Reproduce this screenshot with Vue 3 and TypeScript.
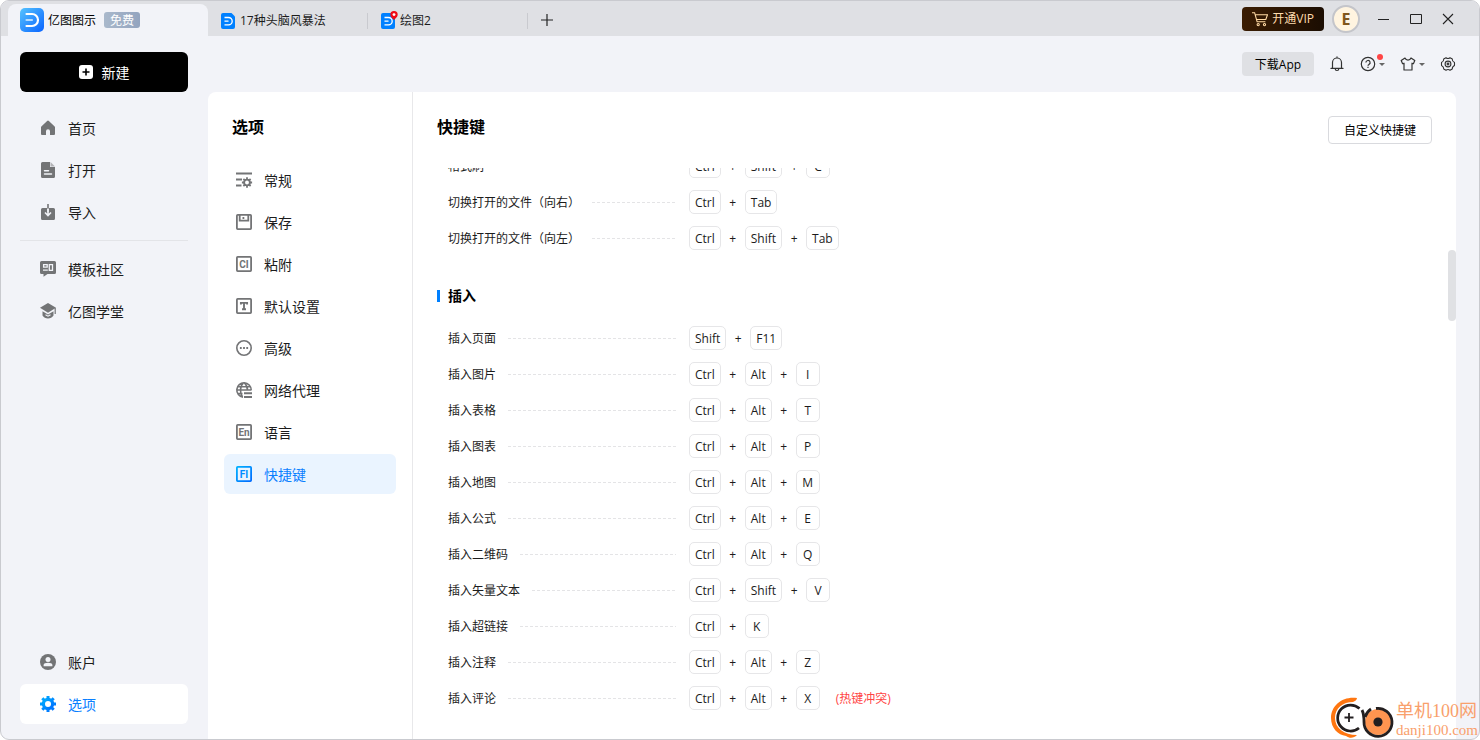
<script setup lang="ts">
interface NavItem {
  label: string
  icon: string
  active?: boolean
}
interface Shortcut {
  name: string
  keys: string[]
  conflict?: boolean
}

const icons: Record<string, string> = {
  home: '<path fill="currentColor" d="M7.1 .9a1.4 1.4 0 0 1 1.8 0l5.500 5.300c.4.3.6.8.6 1.300V14a1 1 0 0 1-1 1h-4v-3.800a2 2 0 0 0-4 0V15H2a1 1 0 0 1-1-1V7.500c0-.5.2-1 .6-1.300z"/>',
  file: '<path fill="currentColor" d="M2.500 0H10v5h5v9.500a1.500 1.500 0 0 1-1.500 1.500h-11A1.500 1.500 0 0 1 1 14.500v-13A1.500 1.500 0 0 1 2.500 0z"/><path fill="currentColor" opacity=".5" d="M10.500 0 15 4.500h-4.500z"/><path stroke="#f2f3f8" stroke-width="1.500" stroke-linecap="round" d="M4.500 8.700h4M4.500 12h7"/>',
  import: '<path fill="currentColor" d="M2.500 4h4.700v4h1.600V4h4.700A1.500 1.500 0 0 1 15 5.500v9a1.500 1.500 0 0 1-1.500 1.500h-11A1.500 1.500 0 0 1 1 14.500v-9A1.500 1.500 0 0 1 2.500 4z"/><path d="M8 0v5" stroke="currentColor" stroke-width="1.600"/><path d="M8 4.500V11M5 8.500l3 3 3-3" fill="none" stroke="#f2f3f8" stroke-width="1.600"/>',
  community: '<path fill="currentColor" d="M1.500 0h13A1.500 1.500 0 0 1 16 1.500v10a1.500 1.500 0 0 1-1.500 1.500H7.500L3.500 15.700V13h-2A1.500 1.500 0 0 1 0 11.500v-10A1.500 1.500 0 0 1 1.500 0z"/><path fill="none" stroke="#f2f3f8" stroke-width="1.300" d="M3.600 3.600h3.600v2.600H3.600zM9.300 3.600h3.200v5.800H9.300zM3 9.200h4.800"/>',
  school: '<path fill="currentColor" d="M8 0l8 4.700-8 5-8-5z"/><path fill="currentColor" d="M2.500 8.200 8 11.500l5.500-3.300v4.300C12.300 14.500 10.200 15.500 8 15.500s-4.300-1-5.500-3z"/><path stroke="currentColor" stroke-width="1.200" d="M15.200 5v6"/><path stroke="#f2f3f8" stroke-width="1.100" fill="none" d="M5.500 11.800 8 13.200l2.500-1.400"/>',
  account: '<circle cx="8" cy="8" r="8" fill="currentColor"/><circle cx="8" cy="5.600" r="2.500" fill="#f2f3f8"/><path fill="#f2f3f8" d="M3.600 12.200V11c0-1.400 2-2.300 4.400-2.300s4.400.9 4.400 2.300v1.200z"/>',
  gear: '<circle cx="8" cy="8" r="4.600" fill="none" stroke="url(#blueGrad)" stroke-width="3.200"/><path fill="none" stroke="url(#blueGrad)" stroke-width="3" d="M8 0v3M8 13v3M0 8h3M13 8h3M2.300 2.300l2.200 2.200M11.500 11.500l2.200 2.200M13.700 2.300l-2.200 2.200M4.500 11.500l-2.200 2.200"/>',
  general: '<path fill="none" stroke="currentColor" stroke-width="1.800" d="M0 1.500h16M0 7.500h6M0 13.500h5.500"/><circle cx="11" cy="10.500" r="2.900" fill="none" stroke="currentColor" stroke-width="1.900"/><path fill="none" stroke="currentColor" stroke-width="1.800" d="M11 5.300v2M11 13.700v2M5.900 10.500h2M14.100 10.500h2M7.400 6.900l1.400 1.400M13.200 12.700l1.400 1.400M14.600 6.900l-1.400 1.400M8.800 12.700l-1.400 1.400"/>',
  save: '<g fill="none" stroke="currentColor" stroke-width="1.800"><rect x=".9" y=".9" width="14.200" height="14.200" rx=".8"/><path d="M3.700 1v5.700h8.600V1"/></g><path fill="currentColor" d="M6.500 3h1.800v2H6.500z"/>',
  paste: '<rect x=".9" y=".9" width="14.200" height="14.200" rx=".8" fill="none" stroke="currentColor" stroke-width="1.800"/><text x="8" y="11.600" class="glyph">CI</text>',
  defaults: '<rect x=".9" y=".9" width="14.200" height="14.200" rx=".8" fill="none" stroke="currentColor" stroke-width="1.800"/><path d="M4.900 6.400V4.900h6.200v1.500M8 4.900v6.400M6 11.300h4" fill="none" stroke="currentColor" stroke-width="1.900"/>',
  advanced: '<circle cx="8" cy="8" r="7.200" fill="none" stroke="currentColor" stroke-width="1.600"/><path fill="currentColor" d="M3.900 7.100h1.800v1.800H3.900zM7.100 7.100h1.800v1.800H7.100zM10.300 7.100h1.800v1.800h-1.800z"/>',
  proxy: '<g fill="none" stroke="currentColor" stroke-width="1.600"><path d="M7 15.200A7.200 7.200 0 1 1 15.200 8M1 8h14.500M1.800 4.800h12.400M6.500 15C3.600 11 3.800 4 7.500 1M8.500 1c2 2 3 4.500 3 7M1.500 11.500h5"/><path d="M8 11.300h8M8 15h8" stroke-width="1.900"/></g>',
  language: '<rect x=".9" y=".9" width="14.200" height="14.200" rx=".8" fill="none" stroke="currentColor" stroke-width="1.800"/><text x="8" y="11.600" class="glyph">En</text>',
  shortcut: '<rect x=".9" y=".9" width="14.200" height="14.200" rx=".8" fill="none" stroke="url(#blueGrad)" stroke-width="1.800"/><text x="8" y="11.600" class="glyph">FI</text>',
}

const mainNav: NavItem[] = [
  { label: '首页', icon: 'home' },
  { label: '打开', icon: 'file' },
  { label: '导入', icon: 'import' },
]
const linkNav: NavItem[] = [
  { label: '模板社区', icon: 'community' },
  { label: '亿图学堂', icon: 'school' },
]
const footNav: NavItem[] = [
  { label: '账户', icon: 'account' },
  { label: '选项', icon: 'gear', active: true },
]
const optionNav: NavItem[] = [
  { label: '常规', icon: 'general' },
  { label: '保存', icon: 'save' },
  { label: '粘附', icon: 'paste' },
  { label: '默认设置', icon: 'defaults' },
  { label: '高级', icon: 'advanced' },
  { label: '网络代理', icon: 'proxy' },
  { label: '语言', icon: 'language' },
  { label: '快捷键', icon: 'shortcut', active: true },
]
const groups: { title: string; items: Shortcut[] }[] = [
  {
    title: '',
    items: [
      { name: '格式刷', keys: ['Ctrl', 'Shift', 'C'] },
      { name: '切换打开的文件（向右）', keys: ['Ctrl', 'Tab'] },
      { name: '切换打开的文件（向左）', keys: ['Ctrl', 'Shift', 'Tab'] },
    ],
  },
  {
    title: '插入',
    items: [
      { name: '插入页面', keys: ['Shift', 'F11'] },
      { name: '插入图片', keys: ['Ctrl', 'Alt', 'I'] },
      { name: '插入表格', keys: ['Ctrl', 'Alt', 'T'] },
      { name: '插入图表', keys: ['Ctrl', 'Alt', 'P'] },
      { name: '插入地图', keys: ['Ctrl', 'Alt', 'M'] },
      { name: '插入公式', keys: ['Ctrl', 'Alt', 'E'] },
      { name: '插入二维码', keys: ['Ctrl', 'Alt', 'Q'] },
      { name: '插入矢量文本', keys: ['Ctrl', 'Shift', 'V'] },
      { name: '插入超链接', keys: ['Ctrl', 'K'] },
      { name: '插入注释', keys: ['Ctrl', 'Alt', 'Z'] },
      { name: '插入评论', keys: ['Ctrl', 'Alt', 'X'], conflict: true },
    ],
  },
]
</script>

<template>
  <div class="window">
    <svg class="defs" aria-hidden="true">
      <defs>
        <linearGradient id="blueGrad" x1="0" y1="0" x2="1" y2="1">
          <stop offset="0" stop-color="#00b0ff" />
          <stop offset="1" stop-color="#006bff" />
        </linearGradient>
        <linearGradient id="logoGrad" x1="0" y1="0" x2="1" y2="1">
          <stop offset="0" stop-color="#55c3ff" />
          <stop offset="1" stop-color="#0a64ff" />
        </linearGradient>
      </defs>
    </svg>

    <header class="titlebar">
      <div class="apptab">
        <svg class="logo" viewBox="0 0 24 24">
          <rect width="24" height="24" rx="5" fill="url(#logoGrad)" />
          <path d="M6.500 6H12a6 6 0 0 1 0 12H6.500" fill="none" stroke="#fff" stroke-width="2.200" stroke-linecap="round" />
          <path d="M6.500 12H12" stroke="#b5dcff" stroke-width="2.200" stroke-linecap="round" />
        </svg>
        <span class="label">亿图图示</span>
        <span class="free">免费</span>
      </div>
      <button class="doctab" type="button">
        <svg class="docicon" viewBox="0 0 14 16">
          <path d="M2 0h8.500L14 3.500V14a2 2 0 0 1-2 2H2a2 2 0 0 1-2-2V2a2 2 0 0 1 2-2z" fill="#0080ff" />
          <path d="M3.500 4.500h4a3.700 3.700 0 0 1 0 7.400h-4M3.500 8.200h4" fill="none" stroke="#fff" stroke-width="1.300" />
        </svg>
        <span>17种头脑风暴法</span>
      </button>
      <button class="doctab" type="button">
        <span class="docwrap">
          <svg class="docicon" viewBox="0 0 14 16">
            <path d="M2 0h10a2 2 0 0 1 2 2v12a2 2 0 0 1-2 2H2a2 2 0 0 1-2-2V2a2 2 0 0 1 2-2z" fill="#0080ff" />
            <path d="M3.500 4.500h4a3.700 3.700 0 0 1 0 7.400h-4M3.500 8.200h4" fill="none" stroke="#fff" stroke-width="1.300" />
          </svg>
          <svg class="pin" viewBox="0 0 8 9">
            <path d="M4 0a3.700 3.700 0 0 1 3.700 3.700C7.700 5.800 5.500 7 4 9 2.500 7 .3 5.800.3 3.700A3.700 3.700 0 0 1 4 0z" fill="#f00a14" />
            <circle cx="4" cy="3.600" r="1.400" fill="#fff" />
          </svg>
        </span>
        <span>绘图2</span>
      </button>
      <button class="addtab" type="button" aria-label="新建标签">
        <svg width="12" height="12" viewBox="0 0 12 12"><path d="M6 0v12M0 6h12" stroke="#222" stroke-width="1.200" /></svg>
      </button>
      <div class="winright">
        <button class="vip" type="button">
          <svg width="16" height="16" viewBox="0 0 16 16" fill="none" stroke="#ffd9a3" stroke-width="1.100">
            <path d="M0 1.700h2.600l2.500 9h8.300M3.200 3.700h12.300l-1.700 4.800H4.500" />
            <circle cx="6.200" cy="13.600" r="1.100" /><circle cx="12.500" cy="13.600" r="1.100" />
          </svg>
          <span>开通VIP</span>
        </button>
        <button class="avatar" type="button">E</button>
        <button class="winbtn" type="button" aria-label="最小化">
          <svg width="12" height="12" viewBox="0 0 12 12"><path d="M0 6.500h11" stroke="#222" /></svg>
        </button>
        <button class="winbtn" type="button" aria-label="最大化">
          <svg width="12" height="12" viewBox="0 0 12 12"><path d="M.5 1.500h11v9H.5z" fill="none" stroke="#222" /></svg>
        </button>
        <button class="winbtn" type="button" aria-label="关闭">
          <svg width="12" height="12" viewBox="0 0 12 12"><path d="M1 1l10 10M11 1 1 11" stroke="#222" stroke-width="1.100" /></svg>
        </button>
      </div>
    </header>

    <div class="body">
      <aside class="sidebar">
        <button class="create" type="button">
          <svg width="14" height="14" viewBox="0 0 14 14">
            <rect width="14" height="14" rx="3" fill="#fff" />
            <path d="M7 3.500v7M3.500 7h7" stroke="#000" stroke-width="1.600" />
          </svg>
          <span class="label">新建</span>
        </button>
        <nav class="nav">
          <a v-for="n in mainNav" :key="n.label" href="#" class="item">
            <svg class="ico" viewBox="0 0 16 16" v-html="icons[n.icon]"></svg><span class="label">{{ n.label }}</span>
          </a>
        </nav>
        <hr class="rule" />
        <nav class="nav">
          <a v-for="n in linkNav" :key="n.label" href="#" class="item">
            <svg class="ico" viewBox="0 0 16 16" v-html="icons[n.icon]"></svg><span class="label">{{ n.label }}</span>
          </a>
        </nav>
        <nav class="nav foot">
          <a v-for="n in footNav" :key="n.label" href="#" class="item" :class="{ current: n.active }">
            <svg class="ico" viewBox="0 0 16 16" v-html="icons[n.icon]"></svg><span class="label">{{ n.label }}</span>
          </a>
        </nav>
      </aside>

      <main class="main">
        <div class="toolbar">
          <button class="download" type="button"><span class="label">下载App</span></button>
          <button class="tool" type="button" aria-label="通知">
            <svg width="16" height="16" viewBox="0 0 16 16" fill="none" stroke="#333" stroke-width="1.200">
              <path d="M2 12.400h12M3.500 12.400V6.500a4.500 4.500 0 0 1 9 0v5.900M8 2V.8M6.200 12.700a1.800 1.800 0 0 0 3.600 0" stroke-linecap="round" />
            </svg>
          </button>
          <button class="tool" type="button" aria-label="帮助">
            <svg width="16" height="16" viewBox="0 0 16 16" fill="none" stroke="#333" stroke-width="1.200">
              <circle cx="8" cy="8" r="6.700" />
              <path d="M5.900 6.600a2.100 2.100 0 1 1 3.100 1.800c-.7.4-1 .7-1 1.400M8 10.800V12" />
            </svg>
            <i class="caret"></i>
            <i class="dot"></i>
          </button>
          <button class="tool" type="button" aria-label="主题">
            <svg width="16" height="16" viewBox="0 0 16 16" fill="none" stroke="#333" stroke-width="1.200" stroke-linejoin="round">
              <path d="M5 2 1.200 4.600 2.600 7.700 4 7.200V14h8V7.200l1.400.5 1.400-3.100L11 2a3.200 3.200 0 0 1-6 0z" />
            </svg>
            <i class="caret"></i>
          </button>
          <button class="tool" type="button" aria-label="设置">
            <svg width="16" height="16" viewBox="0 0 16 16" fill="none" stroke="#333" stroke-width="1.100" stroke-linejoin="round">
              <path d="M6 1.800Q8 3.300 10 1.800L12.300 3.100Q12.100 5.500 14.500 6.600V9.400Q12.100 10.500 12.300 12.900L10 14.200Q8 12.700 6 14.200L3.700 12.900Q3.900 10.500 1.500 9.400V6.600Q3.900 5.500 3.700 3.100z" />
              <circle cx="8" cy="8" r="2.900" /><circle cx="8" cy="8" r=".9" />
            </svg>
          </button>
        </div>

        <div class="panel">
          <section class="options">
            <h1 class="title">选项</h1>
            <nav class="nav optnav">
              <a v-for="n in optionNav" :key="n.label" href="#" class="item opt" :class="{ chosen: n.active }">
                <svg class="ico" viewBox="0 0 16 16" v-html="icons[n.icon]"></svg><span class="label">{{ n.label }}</span>
              </a>
            </nav>
          </section>

          <section class="content">
            <div class="head">
              <h2 class="title">快捷键</h2>
              <button class="custom" type="button"><span class="label">自定义快捷键</span></button>
            </div>
            <div class="scroll">
              <div class="list">
                <template v-for="g in groups" :key="g.title">
                  <h3 v-if="g.title" class="grouptitle">{{ g.title }}</h3>
                  <div v-for="s in g.items" :key="s.name" class="row">
                    <div class="name"><span class="label">{{ s.name }}</span><i class="dash"></i></div>
                    <div class="keys">
                      <template v-for="(k, i) in s.keys" :key="k">
                        <span v-if="i > 0" class="plus label">+</span>
                        <kbd>{{ k }}</kbd>
                      </template>
                      <span v-if="s.conflict" class="conflict label">(热键冲突)</span>
                    </div>
                  </div>
                </template>
              </div>
              <div class="track"><div class="thumb"></div></div>
            </div>
          </section>
        </div>
      </main>
    </div>

    <div class="mark">
      <svg width="64" height="42" viewBox="0 0 64 42" fill="none">
        <path d="M26 1C12-1 0 8 0 21c0 10 7 17 15 18 4 3 8 2 11-1C13 38 4 31 4 21 4 11 12 5 22 5c2-1 4-2 4-4z" fill="#ff7610" />
        <circle cx="19" cy="21" r="14" fill="#fff" />
        <path d="M28.500 11.500A13 13 0 1 0 28 31" stroke="#231f20" stroke-width="2.700" />
        <path d="M18 16v9M13.500 20.500h9" stroke="#231f20" stroke-width="1.800" />
        <circle cx="47" cy="25" r="13" fill="#ff9550" />
        <path d="M45 11.500A14 14 0 1 1 33 25c0-5 0-8-2-12" stroke="#231f20" stroke-width="2.800" />
        <path d="M34 20c1-3 3-6 6-8" stroke="#231f20" stroke-width="2.800" />
        <circle cx="47" cy="25" r="4.600" fill="#231f20" />
      </svg>
      <div class="marktext">
        <span class="marktop">单机100网</span>
        <span class="markurl">danji100.com</span>
      </div>
    </div>
  </div>
</template>

<style>
body {
  margin: 0;
  background: #fff;
}
.glyph {
  font: 700 10px Roboto, sans-serif;
  fill: currentColor;
  text-anchor: middle;
}
</style>

<style scoped>
* {
  box-sizing: border-box;
}
.window {
  position: relative;
  display: flex;
  flex-direction: column;
  height: 100vh;
  border: 1px solid #c9cacf;
  border-radius: 9px;
  overflow: hidden;
  background: #f2f3f8;
  color: #1c1c1c;
  font-family: "Open Sans", "Noto Sans CJK SC", sans-serif;
  font-size: 12px;
  font-kerning: none;
  line-height: 16px;
}
.defs {
  position: absolute;
  width: 0;
  height: 0;
}
button {
  padding: 0;
  border: 0;
  background: none;
  color: inherit;
  font: inherit;
  font-kerning: none;
}
svg {
  display: block;
  flex: none;
}
.label {
  display: block;
  padding-top: 2px;
}
.titlebar {
  display: flex;
  height: 35px;
  padding-left: 7px;
  background: #dfe0e4;
  flex: none;
}
.apptab {
  display: flex;
  align-items: center;
  width: 200px;
  margin-top: 3px;
  padding: 0 0 0 12px;
  border-radius: 8px 8px 0 0;
  background: #f2f3f8;
  color: #000;
  gap: 4px;
}
.logo {
  width: 24px;
  height: 24px;
}
.free {
  height: 16px;
  margin-left: 4px;
  padding: 1px 6px 0;
  border-radius: 3px;
  background: linear-gradient(90deg, #a9b8cb, #93a4bf);
  color: #fff;
}
.doctab {
  display: flex;
  align-items: center;
  align-self: center;
  width: 160px;
  height: 16px;
  margin-top: 4px;
  padding-left: 13px;
  gap: 5px;
  border-right: 1px solid #c9cacf;
}
.docicon {
  width: 14px;
  height: 16px;
}
.docwrap {
  position: relative;
}
.pin {
  position: absolute;
  top: -2px;
  right: -3px;
  width: 8px;
  height: 9px;
}
.addtab {
  display: flex;
  align-items: center;
  justify-content: center;
  width: 38px;
  padding-top: 3px;
}
.winright {
  display: flex;
  align-items: center;
  margin-left: auto;
  padding-right: 15px;
}
.vip {
  display: flex;
  align-items: center;
  height: 24px;
  margin-right: 8px;
  padding: 0 10px;
  gap: 4px;
  border-radius: 4px;
  background: linear-gradient(90deg, #3a1c02, #1b0d02);
  color: #ffdcae;
}
.avatar {
  width: 28px;
  height: 28px;
  margin-right: 8px;
  border: 2px solid #c4c5ca;
  border-radius: 50%;
  background: #fff4e0;
  color: #80561c;
  font-size: 16px;
  font-weight: 700;
}
.winbtn {
  display: flex;
  align-items: center;
  justify-content: center;
  width: 32px;
  height: 32px;
}
.body {
  display: flex;
  flex: 1;
  min-height: 0;
}
.sidebar {
  display: flex;
  flex-direction: column;
  width: 207px;
  padding: 16px 20px 15px 19px;
  flex: none;
}
.create {
  display: flex;
  align-items: center;
  justify-content: center;
  height: 40px;
  margin-bottom: 16px;
  gap: 9px;
  border-radius: 6px;
  background: #000;
  color: #fff;
  font-size: 14px;
  flex: none;
}
.nav {
  display: flex;
  flex-direction: column;
  gap: 2px;
}
.foot {
  margin-top: auto;
}
.item {
  display: flex;
  align-items: center;
  height: 40px;
  padding-left: 20px;
  gap: 12px;
  border-radius: 6px;
  color: #1c1c1c;
  font-size: 14px;
  text-decoration: none;
}
.ico {
  width: 16px;
  height: 16px;
  color: #737476;
  overflow: visible;
}
.current {
  background: #fff;
  color: #0a80ff;
}
.rule {
  width: 100%;
  height: 1px;
  margin: 8px 0;
  border: 0;
  background: #e3e4e8;
}
.main {
  display: flex;
  flex: 1;
  flex-direction: column;
  min-width: 0;
  padding-right: 23px;
}
.toolbar {
  display: flex;
  align-items: center;
  justify-content: flex-end;
  height: 56px;
  gap: 15px;
  flex: none;
}
.download {
  width: 72px;
  height: 24px;
  border-radius: 4px;
  background: #dfe0e4;
  color: #000;
}
.tool {
  position: relative;
  display: flex;
  align-items: center;
  gap: 3px;
}
.caret {
  border: 3px solid transparent;
  border-top-color: #666;
  border-bottom: 0;
}
.dot {
  position: absolute;
  top: -2px;
  right: 2px;
  width: 6px;
  height: 6px;
  border-radius: 50%;
  background: #ff4545;
}
.panel {
  display: flex;
  flex: 1;
  min-height: 0;
  border-radius: 8px 8px 0 0;
  background: #fff;
}
.options {
  width: 205px;
  padding: 24px 16px 0;
  border-right: 1px solid #e8e8ea;
  flex: none;
}
.title {
  margin: 0;
  color: #000;
  font-size: 16px;
  font-weight: 700;
  line-height: 22px;
}
.options .title {
  padding-left: 8px;
}
.optnav {
  margin-top: 22px;
}
.opt {
  padding-left: 12px;
}
.chosen {
  background: #eaf4ff;
  color: #0a80ff;
}
.chosen .ico {
  color: #008cff;
}
.content {
  display: flex;
  flex: 1;
  flex-direction: column;
  min-width: 0;
  padding: 24px 0 24px 24px;
}
.head {
  display: flex;
  align-items: flex-start;
  justify-content: space-between;
  height: 52px;
  padding-right: 24px;
  flex: none;
}
.custom {
  width: 104px;
  height: 28px;
  border: 1px solid #d9dade;
  border-radius: 4px;
  background: #fff;
  color: #000;
}
.scroll {
  display: flex;
  flex: 1;
  min-height: 0;
  overflow: hidden;
}
.list {
  flex: 1;
  margin-top: -20px;
}
.row {
  display: flex;
  align-items: center;
  height: 36px;
  padding-left: 11px;
  gap: 13px;
}
.name {
  display: flex;
  align-items: center;
  width: 228px;
  gap: 12px;
}
.dash {
  flex: 1;
  height: 1px;
  background: repeating-linear-gradient(90deg, #e4e4e6 0 3px, transparent 3px 5px);
}
.keys {
  display: flex;
  align-items: center;
  gap: 8px;
}
kbd {
  min-width: 24px;
  height: 24px;
  padding: 4px 5px 2px;
  border: 1px solid #e6e6e8;
  border-radius: 5px;
  font: inherit;
  font-kerning: none;
  text-align: center;
}
.plus {
  width: 8px;
  text-align: center;
}
.conflict {
  margin-left: 8px;
  color: #ff4545;
}
.grouptitle {
  display: flex;
  align-items: center;
  height: 64px;
  margin: 0;
  padding-top: 16px;
  gap: 8px;
  color: #000;
  font-size: 14px;
  font-weight: 700;
}
.grouptitle::before {
  width: 3px;
  height: 12px;
  background: #0080ff;
  content: "";
}
.track {
  width: 8px;
  padding-top: 82px;
}
.thumb {
  height: 71px;
  border-radius: 4px;
  background: #e0e1e4;
}
.mark {
  position: absolute;
  right: 1px;
  bottom: 0;
  display: flex;
  align-items: flex-end;
  gap: 1px;
}
.marktext {
  display: flex;
  flex-direction: column;
  color: #f9a06c;
  font-family: "Liberation Serif", "Noto Sans CJK SC", serif;
}
.marktop {
  font-size: 18px;
  line-height: 20px;
}
.markurl {
  font-size: 15px;
  line-height: 18px;
}
</style>
